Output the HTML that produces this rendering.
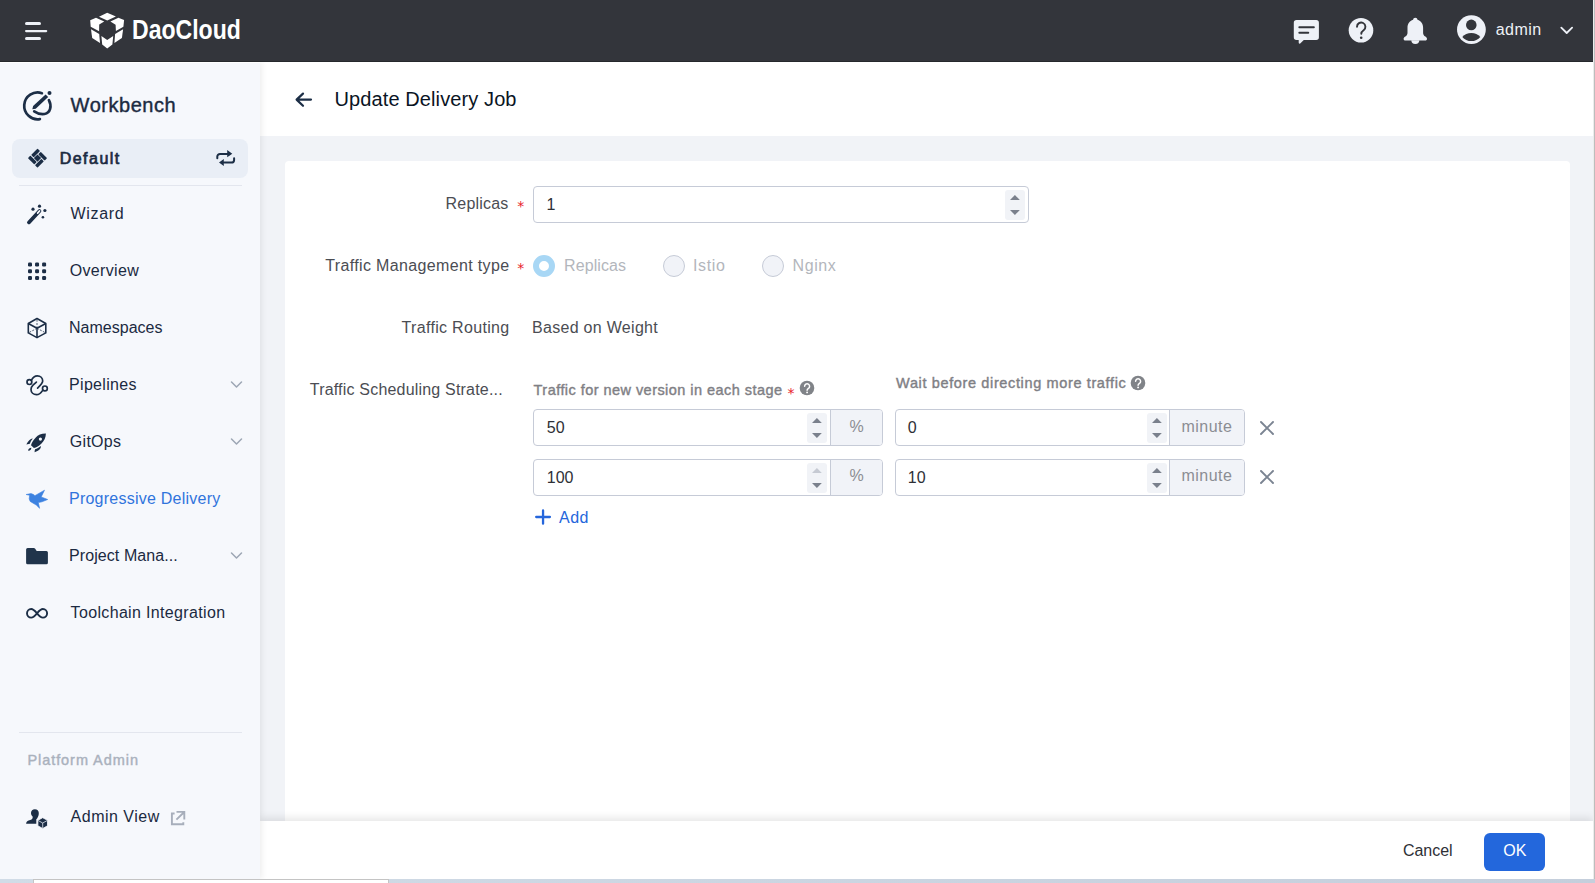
<!DOCTYPE html>
<html lang="en">
<head>
<meta charset="utf-8">
<title>Update Delivery Job</title>
<style>
*{box-sizing:border-box;margin:0;padding:0}
html,body{width:1595px;height:883px;overflow:hidden;background:#fff}
body{font-family:"Liberation Sans",sans-serif;color:#1b2a41;position:relative}
.abs{position:absolute;overflow:visible}
.o{position:absolute;width:0;height:0}
.o>*{position:absolute}
#win{position:absolute;left:0;top:0;width:1593px;height:879px;overflow:hidden;background:#f1f3f7}
#win>*{position:absolute}
#edge-r{position:absolute;left:1593px;top:0;width:2px;height:879px;background:linear-gradient(90deg,#ececec 0,#ececec 50%,#bdbdbd 50%,#bdbdbd 100%)}
#edge-b{position:absolute;left:0;top:879px;width:1595px;height:4px;background:linear-gradient(90deg,#d1dce7,#c5cfdc)}
#edge-b i{position:absolute;left:33px;top:0;width:356px;height:4px;background:#fff;border:1px solid #c4c4c4;border-bottom:0}
#hdr{left:0;top:0;width:1593px;height:62px;background:#33353b;border-bottom:1px solid #25282c}
#side{left:0;top:62px;width:260px;height:817px;border-top:1px solid #fff;background:#f6f8fc;box-shadow:2px 0 6px rgba(0,0,0,.07)}
#side>.o{left:0;top:-63px}
#mainhdr{left:260px;top:61px;width:1333px;height:75px;background:#fff}
#mainhdr>.o{left:-260px;top:-61px}
#card{position:absolute;left:285px;top:161px;width:1285px;height:700px;background:#fff;border-radius:4px}
#card>.o{left:-285px;top:-161px}
#foot{left:260px;top:821px;width:1333px;height:58px;background:#fff;box-shadow:0 -3px 8px rgba(0,0,0,.10)}
#foot>.o{left:-260px;top:-821px}
.t{position:absolute;white-space:nowrap}
.inp{position:absolute;height:37px;border:1px solid #c6cbd7;border-radius:4px;background:#fff;overflow:hidden}
.inp .addon{position:absolute;top:0;bottom:0;right:0;background:#f1f3f8;border-left:1px solid #c6cbd7}
.spin{position:absolute;width:20px;height:30px;background:#f1f3f7;border-radius:3px}
.radio{position:absolute;width:22px;height:22px;border-radius:50%;border:1px solid #c6cbd7;background:#f1f3f8}
.radio.on{border:6px solid #a8d7f5;background:#fff}
.sel{left:12px;top:139px;width:236px;height:39px;border-radius:8px;background:#e9eef6}
.hr{height:1px;background:#e3e6ee;left:19px;width:223px}
.btn-ok{left:1484px;top:833px;width:61px;height:38px;border-radius:6px;background:#2367dc}
.req{position:absolute;color:#e8222a;font-family:"DejaVu Sans",sans-serif;font-size:14px;line-height:14px;font-weight:400}
#t_dao{left:131.5px;top:14.6px;font-size:27.5px;line-height:30px;font-weight:700;color:#fff;transform-origin:0 0;transform:scaleX(.838);letter-spacing:0}
h1.t{font-weight:400}
#content{left:0;top:0;width:1593px;height:879px}

#t_wb{left:70.6px;top:94px;font-size:20px;line-height:22px;font-weight:400;color:#1b2a41;letter-spacing:0.528px;-webkit-text-stroke:.4px}
#t_def{left:59.7px;top:150px;font-size:16px;line-height:17px;font-weight:400;color:#1b2a41;letter-spacing:1.476px;-webkit-text-stroke:.7px}
#t_wiz{left:70.6px;top:205px;font-size:16px;line-height:17px;font-weight:400;color:#1b2a41;letter-spacing:0.660px}
#t_ov{left:69.8px;top:262px;font-size:16px;line-height:17px;font-weight:400;color:#1b2a41;letter-spacing:0.316px}
#t_ns{left:69.0px;top:319px;font-size:16px;line-height:17px;font-weight:400;color:#1b2a41;letter-spacing:0.014px}
#t_pl{left:69.0px;top:376px;font-size:16px;line-height:17px;font-weight:400;color:#1b2a41;letter-spacing:0.328px}
#t_go{left:69.8px;top:433px;font-size:16px;line-height:17px;font-weight:400;color:#1b2a41;letter-spacing:0.293px}
#t_pd{left:69.0px;top:490px;font-size:16px;line-height:17px;font-weight:400;color:#3074dc;letter-spacing:0.236px}
#t_pm{left:69.0px;top:547px;font-size:16px;line-height:17px;font-weight:400;color:#1b2a41;letter-spacing:0.085px}
#t_ti{left:70.6px;top:604px;font-size:16px;line-height:17px;font-weight:400;color:#1b2a41;letter-spacing:0.340px}
#t_pa{left:27.4px;top:752px;font-size:14.5px;line-height:16px;font-weight:400;color:#aab1bd;letter-spacing:0.942px;-webkit-text-stroke:.4px}
#t_av{left:70.6px;top:808px;font-size:16px;line-height:17px;font-weight:400;color:#1b2a41;letter-spacing:0.490px}
#t_title{left:334.5px;top:88px;font-size:20px;line-height:22px;font-weight:400;color:#0a1424;letter-spacing:0.106px}
#t_rep{left:445.6px;top:195px;font-size:16px;line-height:17px;font-weight:400;color:#4b4d53;letter-spacing:0.192px}
#t_tmt{left:325.3px;top:257px;font-size:16px;line-height:17px;font-weight:400;color:#4b4d53;letter-spacing:0.348px}
#t_tr{left:401.6px;top:319px;font-size:16px;line-height:17px;font-weight:400;color:#4b4d53;letter-spacing:0.312px}
#t_bow{left:532.0px;top:319px;font-size:16px;line-height:17px;font-weight:400;color:#4b4d53;letter-spacing:0.300px}
#t_tss{left:309.8px;top:381px;font-size:16px;line-height:17px;font-weight:400;color:#4b4d53;letter-spacing:0.191px}
#t_tfn{left:533.6px;top:382px;font-size:14.5px;line-height:16px;font-weight:400;color:#7f8085;letter-spacing:0.452px;-webkit-text-stroke:.4px}
#t_wbd{left:896.1px;top:375px;font-size:14.5px;line-height:16px;font-weight:400;color:#7f8085;letter-spacing:0.634px;-webkit-text-stroke:.4px}
#t_r1{left:564.0px;top:257px;font-size:16px;line-height:17px;font-weight:400;color:#b3b6bc;letter-spacing:0.092px}
#t_r2{left:693.0px;top:257px;font-size:16px;line-height:17px;font-weight:400;color:#b3b6bc;letter-spacing:0.649px}
#t_r3{left:792.6px;top:257px;font-size:16px;line-height:17px;font-weight:400;color:#b3b6bc;letter-spacing:0.558px}
#t_v1{left:546.5px;top:196px;font-size:16px;line-height:17px;font-weight:400;color:#2e3036;letter-spacing:0.000px}
#t_v50{left:546.8px;top:419px;font-size:16px;line-height:17px;font-weight:400;color:#2e3036;letter-spacing:0.000px}
#t_v100{left:546.8px;top:469px;font-size:16px;line-height:17px;font-weight:400;color:#2e3036;letter-spacing:0.000px}
#t_v0{left:907.8px;top:419px;font-size:16px;line-height:17px;font-weight:400;color:#2e3036;letter-spacing:0.000px}
#t_v10{left:907.8px;top:469px;font-size:16px;line-height:17px;font-weight:400;color:#2e3036;letter-spacing:0.000px}
#t_m1{left:1181.5px;top:418px;font-size:16px;line-height:17px;font-weight:400;color:#8b8d93;letter-spacing:0.470px}
#t_m2{left:1181.5px;top:467px;font-size:16px;line-height:17px;font-weight:400;color:#8b8d93;letter-spacing:0.470px}
#t_p1{left:849.5px;top:418px;font-size:16px;line-height:17px;font-weight:400;color:#8b8d93;letter-spacing:0.000px}
#t_p2{left:849.5px;top:467px;font-size:16px;line-height:17px;font-weight:400;color:#8b8d93;letter-spacing:0.000px}
#t_add{left:559.0px;top:509px;font-size:16px;line-height:17px;font-weight:400;color:#2566dc;letter-spacing:0.496px}
#t_cancel{left:1402.9px;top:842px;font-size:16px;line-height:17px;font-weight:400;color:#2e3036;letter-spacing:-0.011px}
#t_ok{left:1503.2px;top:842px;font-size:16px;line-height:17px;font-weight:400;color:#ffffff;letter-spacing:0.075px}
#t_admin{left:1495.8px;top:21px;font-size:16px;line-height:17px;font-weight:400;color:#eef1f6;letter-spacing:0.420px}
</style>
</head>
<body>
<div id="win">
<main id="content">
<section id="card">
<div class="o">
<label class="t" id="t_rep">Replicas</label><span class="req" style="left:517.2px;top:199px">*</span>
<div class="inp" style="left:533px;top:186px;width:496px"></div><span class="t" id="t_v1">1</span><div class="spin" style="left:1005px;top:190px"></div><svg class="abs" style="left:1005px;top:190px" width="20" height="30" viewBox="1005 190 20 30" ><path d="M1010.0 200 L1014.9 195 L1019.8 200Z" fill="#7a808c"/><path d="M1010.0 210 L1014.9 215 L1019.8 210Z" fill="#7a808c"/></svg>
<label class="t" id="t_tmt">Traffic Management type</label><span class="req" style="left:517.2px;top:261px">*</span>
<div class="radio on" style="left:533px;top:255px"></div><span class="t" id="t_r1">Replicas</span>
<div class="radio" style="left:663px;top:255px"></div><span class="t" id="t_r2">Istio</span>
<div class="radio" style="left:762px;top:255px"></div><span class="t" id="t_r3">Nginx</span>
<label class="t" id="t_tr">Traffic Routing</label><span class="t" id="t_bow">Based on Weight</span>
<label class="t" id="t_tss">Traffic Scheduling Strate...</label>
<span class="t" id="t_tfn">Traffic for new version in each stage</span><span class="req" style="left:787.6px;top:386px">*</span><svg class="abs" style="left:798.1px;top:379.4px" width="18" height="18" viewBox="798.1 379.4 18 18" ><circle cx="807.1" cy="388.4" r="7.3" fill="#808388"/><path d="M804.7 386.7 a2.5 2.5 0 1 1 3.8 2.1 c-0.9 0.6 -1.3 1 -1.3 1.9" fill="none" stroke="#fff" stroke-width="1.5" stroke-linecap="round"/><circle cx="807.2" cy="392.79999999999995" r="0.95" fill="#fff"/></svg>
<span class="t" id="t_wbd">Wait before directing more traffic</span><svg class="abs" style="left:1129px;top:373.9px" width="18" height="18" viewBox="1129 373.9 18 18" ><circle cx="1138" cy="382.9" r="7.3" fill="#808388"/><path d="M1135.6 381.2 a2.5 2.5 0 1 1 3.8 2.1 c-0.9 0.6 -1.3 1 -1.3 1.9" fill="none" stroke="#fff" stroke-width="1.5" stroke-linecap="round"/><circle cx="1138.1" cy="387.29999999999995" r="0.95" fill="#fff"/></svg>
<div class="inp" style="left:533px;top:409px;width:350px"><div class="addon" style="width:52px"></div></div><span class="t" id="t_v50">50</span><div class="spin" style="left:807px;top:413px"></div><svg class="abs" style="left:807px;top:413px" width="20" height="30" viewBox="807 413 20 30" ><path d="M812.0 423 L816.9 418 L821.8 423Z" fill="#7a808c"/><path d="M812.0 433 L816.9 438 L821.8 433Z" fill="#7a808c"/></svg><span class="t" id="t_p1">%</span>
<div class="inp" style="left:895px;top:409px;width:350px"><div class="addon" style="width:75px"></div></div><span class="t" id="t_v0">0</span><div class="spin" style="left:1147px;top:413px"></div><svg class="abs" style="left:1147px;top:413px" width="20" height="30" viewBox="1147 413 20 30" ><path d="M1152.0 423 L1156.9 418 L1161.8000000000002 423Z" fill="#7a808c"/><path d="M1152.0 433 L1156.9 438 L1161.8000000000002 433Z" fill="#7a808c"/></svg><span class="t" id="t_m1">minute</span><svg class="abs" style="left:1258.3px;top:418.6px" width="18" height="18" viewBox="1258.3 418.6 18 18" ><path d="M1261.3 421.6 L1273.3 433.6 M1273.3 421.6 L1261.3 433.6" stroke="#7b8492" stroke-width="1.9" stroke-linecap="round"/></svg>
<div class="inp" style="left:533px;top:459px;width:350px"><div class="addon" style="width:52px"></div></div><span class="t" id="t_v100">100</span><div class="spin" style="left:807px;top:463px"></div><svg class="abs" style="left:807px;top:463px" width="20" height="30" viewBox="807 463 20 30" ><path d="M812.0 473 L816.9 468 L821.8 473Z" fill="#c6cad3"/><path d="M812.0 483 L816.9 488 L821.8 483Z" fill="#7a808c"/></svg><span class="t" id="t_p2">%</span>
<div class="inp" style="left:895px;top:459px;width:350px"><div class="addon" style="width:75px"></div></div><span class="t" id="t_v10">10</span><div class="spin" style="left:1147px;top:463px"></div><svg class="abs" style="left:1147px;top:463px" width="20" height="30" viewBox="1147 463 20 30" ><path d="M1152.0 473 L1156.9 468 L1161.8000000000002 473Z" fill="#7a808c"/><path d="M1152.0 483 L1156.9 488 L1161.8000000000002 483Z" fill="#7a808c"/></svg><span class="t" id="t_m2">minute</span><svg class="abs" style="left:1258.3px;top:468.1px" width="18" height="18" viewBox="1258.3 468.1 18 18" ><path d="M1261.3 471.1 L1273.3 483.1 M1273.3 471.1 L1261.3 483.1" stroke="#7b8492" stroke-width="1.9" stroke-linecap="round"/></svg>
<svg class="abs" style="left:533px;top:508px" width="20" height="20" viewBox="533 508 20 20" ><path d="M536.2 517 H549.9 M543.05 510.4 V523.7" stroke="#2566dc" stroke-width="2.3" stroke-linecap="round"/></svg><span class="t" id="t_add">Add</span>
</div>
</section>
</main>
<footer id="foot">
<div class="o"><span class="t" id="t_cancel">Cancel</span><div class="btn-ok"></div><span class="t" id="t_ok">OK</span></div>
</footer>
<div id="mainhdr">
<div class="o"><svg class="abs" style="left:293px;top:91px" width="22" height="18" viewBox="293 91 22 18" ><path d="M311 99.6 H297 M303 93.6 L296.6 99.6 L303 105.8" fill="none" stroke="#1c2e46" stroke-width="2.2" stroke-linecap="round" stroke-linejoin="round"/></svg><h1 class="t" id="t_title">Update Delivery Job</h1></div>
</div>
<nav id="side">
<div class="o">
<svg class="abs" style="left:20px;top:88px" width="36" height="36" viewBox="20 88 36 36" ><g fill="none" stroke="#1c2e46" stroke-width="2.7" stroke-linecap="round"><path d="M41.9 93.2 A13.4 13.4 0 1 0 39.9 119.1"/><path d="M48.9 100.2 C52 106 50.5 113 44.5 114 C40.5 114.6 37 113.2 34.2 111.3"/></g><path d="M32.3 109.3 L33.1 106 L45.6 94.4 L48.2 97.1 L35.7 108.7 Z" fill="#1c2e46"/><circle cx="49.5" cy="93.1" r="2" fill="#1c2e46"/></svg><span class="t" id="t_wb">Workbench</span>
<div class="sel"></div>
<svg class="abs" style="left:26px;top:147px" width="24" height="24" viewBox="26 147 24 24" ><g transform="translate(37.5 158.1) rotate(45)" fill="#1c2e46"><rect x="-6.8" y="-6.8" width="3.5" height="9.0" rx="0.6"/><rect x="-2.1999999999999997" y="-6.8" width="9.0" height="3.5" rx="0.6"/><rect x="3.3" y="-2.1999999999999997" width="3.5" height="9.0" rx="0.6"/><rect x="-6.8" y="3.3" width="9.0" height="3.5" rx="0.6"/><rect x="-2.6" y="-2.6" width="5.2" height="5.2"/></g></svg><span class="t" id="t_def">Default</span><svg class="abs" style="left:214px;top:148px" width="24" height="22" viewBox="214 148 24 22" ><g fill="none" stroke="#1c2e46" stroke-width="2" stroke-linecap="round"><path d="M217.3 158.2 v-1.6 a2.7 2.7 0 0 1 2.7 -2.7 h7.6"/><path d="M234.1 158.2 v1.7 a2.7 2.7 0 0 1 -2.7 2.7 h-7.5"/></g><path fill="#1c2e46" d="M227.2 150 L232.3 153.8 L227.2 157.3z M223.8 159 L219 162.5 L223.8 166z"/></svg>
<div class="hr" style="top:185px"></div>
<svg class="abs" style="left:24px;top:202px" width="26" height="26" viewBox="24 202 26 26" ><path d="M28.9 222.4 L39.5 211" stroke="#1c2e46" stroke-width="3.7" stroke-linecap="round"/><path d="M37.6 213.1 L39.6 210.9" stroke="#f6f8fc" stroke-width="1.6" stroke-linecap="round"/><g fill="#1c2e46"><circle cx="33" cy="209.2" r="1.6"/><circle cx="39.5" cy="206.2" r="1.6"/><circle cx="44.9" cy="210.5" r="1.6"/><circle cx="42.9" cy="217.2" r="1.3"/></g></svg><span class="t" id="t_wiz">Wizard</span>
<svg class="abs" style="left:26px;top:260px" width="24" height="24" viewBox="26 260 24 24" ><g fill="#1c2e46"><rect x="28.0" y="262.5" width="4" height="4" rx="1.2"/><rect x="28.0" y="269.25" width="4" height="4" rx="1.2"/><rect x="28.0" y="276.0" width="4" height="4" rx="1.2"/><rect x="35.05" y="262.5" width="4" height="4" rx="1.2"/><rect x="35.05" y="269.25" width="4" height="4" rx="1.2"/><rect x="35.05" y="276.0" width="4" height="4" rx="1.2"/><rect x="42.1" y="262.5" width="4" height="4" rx="1.2"/><rect x="42.1" y="269.25" width="4" height="4" rx="1.2"/><rect x="42.1" y="276.0" width="4" height="4" rx="1.2"/></g></svg><span class="t" id="t_ov">Overview</span>
<svg class="abs" style="left:26px;top:316px" width="24" height="24" viewBox="26 316 24 24" ><g fill="none" stroke="#1c2e46" stroke-width="1.6" stroke-linejoin="round"><path d="M37 318.5 L45.8 323.5 V332.9 L37 337.6 L28.3 332.9 V323.5Z"/><path d="M28.3 323.5 L37 328.3 L45.8 323.5 M37 328.3 V337.6"/></g><g fill="none" stroke="#1c2e46" stroke-width="1" stroke-dasharray="2 1.3" opacity=".75"><path d="M37 328.3 V318.5 M37 328.3 L28.3 332.9 M37 328.3 L45.8 332.9"/></g></svg><span class="t" id="t_ns">Namespaces</span>
<svg class="abs" style="left:24px;top:373px" width="26" height="24" viewBox="24 373 26 24" ><g fill="none" stroke="#1c2e46" stroke-width="1.7" stroke-linecap="round"><circle cx="29.4" cy="382.1" r="2.4"/><circle cx="44.9" cy="388.4" r="2.4"/><path d="M31.3 380.3 C32.8 377.5 34.8 375.8 37.3 375.8 C40.5 375.8 42.7 378.2 42.7 381 C42.7 383 41.6 384.3 37.6 388.1"/><path d="M36.4 382.1 L33 385.1 C31.5 386.5 31 388 31 389.6 C31 392.5 33.4 394.7 36.5 394.7 C39.2 394.7 41 393 42.9 390.1"/></g></svg><span class="t" id="t_pl">Pipelines</span><svg class="abs" style="left:229px;top:379.3px" width="16" height="12" viewBox="229 379.3 16 12" ><path d="M231.5 382.3 l5 5 l5 -5" fill="none" stroke="#9da6b4" stroke-width="1.5" stroke-linecap="round" stroke-linejoin="round"/></svg>
<svg class="abs" style="left:24px;top:431px" width="26" height="24" viewBox="24 431 26 24" ><g fill="#1c2e46"><path d="M45.9 433.6 C41.5 433.5 38 435.2 35.8 437.5 C33.3 440.1 31.5 443 31 445.2 L33.9 448.1 C36.5 447.5 39 446 41.5 443.6 C43.9 441.2 45.9 437.8 45.9 433.6Z"/><path d="M26.4 444.6 C27.3 442.4 28.6 440.6 30.2 439.5 C31 439 31.9 438.7 32.8 438.6 C31.4 440.3 30.4 442 29.8 443.7Z"/><path d="M34.6 452.2 C34.5 451.2 34.7 450.2 35.1 449.3 C36.9 448.6 39 447.4 40.9 445.9 C40.9 446.9 40.7 447.8 40.3 448.6 C39.3 450.4 36.8 451.6 34.6 452.2Z"/><path d="M28 450.6 C28 449.3 29.4 447.8 31.3 447.7 C31.4 449.6 30 451 28 450.6Z"/></g><circle cx="40.4" cy="439.1" r="1.6" fill="#f6f8fc"/></svg><span class="t" id="t_go">GitOps</span><svg class="abs" style="left:229px;top:436.3px" width="16" height="12" viewBox="229 436.3 16 12" ><path d="M231.5 439.3 l5 5 l5 -5" fill="none" stroke="#9da6b4" stroke-width="1.5" stroke-linecap="round" stroke-linejoin="round"/></svg>
<svg class="abs" style="left:24px;top:488px" width="26" height="22" viewBox="24 488 26 22" ><polygon fill="#3d82e0" stroke="#3d82e0" stroke-width=".6" stroke-linejoin="round" points="26.1,494.5 31.0,493.6 33.5,494.5 34.9,495.7 44.5,490.2 41.2,496.9 47.7,499.5 42.0,501.8 38.3,502.6 39.6,508.3 36.3,505.1 30.2,501.4 29.2,498.9 29.6,495.3"/></svg><span class="t" id="t_pd">Progressive Delivery</span>
<svg class="abs" style="left:24px;top:546px" width="26" height="20" viewBox="24 546 26 20" ><path fill="#20344b" d="M27.6 548 h6.2 c0.5 0 0.9 0.2 1.2 0.6 l1.7 2.4 h9.7 a1.5 1.5 0 0 1 1.5 1.5 v10.3 a1.5 1.5 0 0 1 -1.5 1.5 h-18.8 a1.5 1.5 0 0 1 -1.5 -1.5 v-13.3 a1.5 1.5 0 0 1 1.5 -1.5z"/></svg><span class="t" id="t_pm">Project Mana...</span><svg class="abs" style="left:229px;top:550.3px" width="16" height="12" viewBox="229 550.3 16 12" ><path d="M231.5 553.3 l5 5 l5 -5" fill="none" stroke="#9da6b4" stroke-width="1.5" stroke-linecap="round" stroke-linejoin="round"/></svg>
<svg class="abs" style="left:24px;top:606px" width="26" height="16" viewBox="24 606 26 16" ><path fill="none" stroke="#1c2e46" stroke-width="1.9" d="M37 613.3 C34.6 610.4 33.2 609 31.2 609 C28.7 609 27 611 27 613.3 C27 615.6 28.7 617.6 31.2 617.6 C33.2 617.6 34.6 616.2 37 613.3 C39.4 610.4 40.8 609 42.9 609 C45.4 609 47.1 611 47.1 613.3 C47.1 615.6 45.4 617.6 42.9 617.6 C40.8 617.6 39.4 616.2 37 613.3Z"/></svg><span class="t" id="t_ti">Toolchain Integration</span>
<div class="hr" style="top:732px"></div>
<span class="t" id="t_pa">Platform Admin</span>
<svg class="abs" style="left:24px;top:806px" width="26" height="24" viewBox="24 806 26 24" ><path fill="#1c2e46" d="M34.9 809.2 c-2.3 0 -3.9 1.7 -3.9 3.9 c0 1.5 0.6 2.6 1.6 3.5 c0.3 1.8 -0.3 2.6 -1.6 3.1 l-2.4 0.9 c-1.5 0.6 -2.5 1.7 -2.5 3.2 h10.2 v-4.5 l0.8 -0.9 c1 -1.2 1.7 -2.9 1.7 -5.3 c0 -2.2 -1.6 -3.9 -3.9 -3.9z"/><path fill="#1c2e46" stroke="#f6f8fc" stroke-width=".8" stroke-linejoin="round" d="M42.7 817.7 L47.5 820.3 V825.8 L42.7 828.5 L37.9 825.8 V820.3Z"/><path fill="none" stroke="#dfe6ef" stroke-width=".8" d="M38.3 820.6 L42.7 823 L47.1 820.6 M42.7 823 V828"/></svg><span class="t" id="t_av">Admin View</span><svg class="abs" style="left:170px;top:810px" width="18" height="16" viewBox="170 810 18 16" ><g fill="none" stroke="#a7aebb" stroke-width="1.9"><path d="M174.6 813.5 H171.9 V824.3 H183.3 V822.2"/><path d="M176.4 819.6 L184 812.2 M176.5 811.9 H184.3 V819.6"/></g></svg>
</div>
</nav>
<header id="hdr">
<div class="o">
<svg class="abs" style="left:24px;top:20px" width="26" height="22" viewBox="24 20 26 22" ><g fill="#eef1f7"><rect x="25" y="22" width="16" height="3" rx="1.5"/><rect x="25" y="30" width="22.3" height="2.2" rx="1.1"/><rect x="25" y="37" width="16" height="3" rx="1.5"/></g></svg>
<svg class="abs" style="left:86px;top:8px" width="44" height="44" viewBox="86 8 44 44" ><g fill="#fff"><polygon points="107.2,12.7 115.9,16.5 107.2,20.5 99.0,16.7"/><polygon points="90.2,20.2 96.0,17.7 104.2,21.5 99.2,24.4 99.1,31.2 90.7,26.7"/><polygon points="124.1,20.0 118.4,17.7 110.4,21.5 115.6,24.7 115.9,30.9 123.4,26.7"/><polygon points="91.0,29.2 99.2,33.9 100.0,43.1 92.2,37.9"/><polygon points="123.1,29.2 115.1,33.9 114.4,42.9 121.9,37.9"/><polygon points="101.4,35.9 107.2,39.9 113.2,35.9 112.4,44.6 107.2,48.4 102.2,44.6"/></g></svg>
<span class="t" id="t_dao">DaoCloud</span>
<svg class="abs" style="left:1292px;top:18px" width="28" height="28" viewBox="1292 18 28 28" ><path fill="#eef1f7" d="M1296.5 20 h19.7 a2.7 2.7 0 0 1 2.7 2.7 v14.6 a2.7 2.7 0 0 1 -2.7 2.7 h-12.4 l-3.6 3.4 a0.9 0.9 0 0 1 -1.5 -0.6 v-2.8 h-2.2 a2.7 2.7 0 0 1 -2.7 -2.7 v-14.6 a2.7 2.7 0 0 1 2.7 -2.7z"/><g stroke="#33353b" stroke-width="1.9" stroke-linecap="round"><path d="M1299.3 27.3h14.6M1299.3 32.8h9"/></g></svg>
<svg class="abs" style="left:1347px;top:17px" width="28" height="28" viewBox="1347 17 28 28" ><circle cx="1361" cy="30.3" r="12.3" fill="#eef1f7"/><path d="M1357 26.8 a4.2 4.2 0 1 1 6.6 3.4 c-1.6 1.1 -2.3 1.8 -2.3 3.6" fill="none" stroke="#33353b" stroke-width="1.9" stroke-linecap="round"/><circle cx="1361.2" cy="37.8" r="1.3" fill="#33353b"/></svg>
<svg class="abs" style="left:1402px;top:16px" width="28" height="30" viewBox="1402 16 28 30" ><path fill="#eef1f7" d="M1415.3 17.7 c1.3 0 2.1 0.9 2.2 2 c3.6 1 5.6 4.2 5.6 8 v5.2 c0 1.6 0.9 2.7 2.2 3.7 c1.2 0.9 1.7 1.4 1.7 2.3 c0 0.9 -0.7 1.5 -1.7 1.5 h-20 c-1 0 -1.7 -0.6 -1.7 -1.5 c0 -0.9 0.5 -1.4 1.7 -2.3 c1.3 -1 2.2 -2.1 2.2 -3.7 v-5.2 c0 -3.8 2 -7 5.6 -8 c0.1 -1.1 0.9 -2 2.2 -2z"/><path fill="#eef1f7" d="M1411.3 40.3 h8 a4 3.6 0 0 1 -8 0z"/></svg>
<svg class="abs" style="left:1456px;top:14px" width="32" height="32" viewBox="1456 14 32 32" ><circle cx="1471.4" cy="29.6" r="14.4" fill="#eef1f7"/><circle cx="1471.3" cy="24.9" r="5.3" fill="#33353b"/><path fill="#33353b" d="M1462.3 36.9 c2.2 -2.6 5.4 -4 9 -4 c3.6 0 6.8 1.4 9 4 c-2.2 2.7 -5.4 4.2 -9 4.2 c-3.6 0 -6.8 -1.5 -9 -4.2z"/></svg>
<span class="t" id="t_admin">admin</span>
<svg class="abs" style="left:1559px;top:24px" width="16" height="12" viewBox="1559 24 16 12" ><path d="M1561.3 27.6 l5.4 5.4 l5.4 -5.4" fill="none" stroke="#eef1f7" stroke-width="1.8" stroke-linecap="round" stroke-linejoin="round"/></svg>
</div>
</header>
</div>
<div id="edge-r"></div>
<div id="edge-b"><i></i></div>
</body>
</html>
